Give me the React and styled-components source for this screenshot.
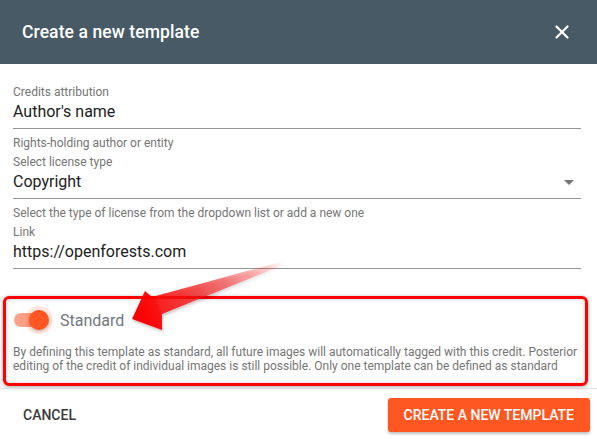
import React from "react";
import styled, { createGlobalStyle } from "styled-components";
import { X } from "lucide-react";

const GlobalStyle = createGlobalStyle`
  html, body {
    margin: 0;
    padding: 0;
    background: #ffffff;
  }
  body {
    font-family: Roboto, "Liberation Sans", Arial, sans-serif;
  }
`;

const fields = [
  {
    label: "Credits attribution",
    value: "Author's name",
    helper: "Rights-holding author or entity",
  },
  {
    label: "Select license type",
    value: "Copyright",
    helper: "Select the type of license from the dropdown list or add a new one",
    select: true,
  },
  {
    label: "Link",
    value: "https://openforests.com",
  },
];

function App() {
  return (
    <>
      <GlobalStyle />
      <Dialog>
        <Header>
          <Title>Create a new template</Title>
          <CloseButton aria-label="close">
            <X size={22} strokeWidth={2.4} />
          </CloseButton>
        </Header>

        <Form>
          {fields.map((f) => (
            <Field key={f.label}>
              <Label>{f.label}</Label>
              <InputRow>
                <Value>{f.value}</Value>
                {f.select && <Caret />}
              </InputRow>
              {f.helper && <Helper>{f.helper}</Helper>}
            </Field>
          ))}
        </Form>

        <Highlight>
          <ToggleRow>
            <Switch>
              <Track />
              <Thumb />
            </Switch>
            <SwitchLabel>Standard</SwitchLabel>
          </ToggleRow>
          <Description>
            By defining this template as standard, all future images will
            automatically tagged with this credit. Posterior editing of the
            credit of individual images is still possible. Only one template
            can be defined as standard
          </Description>
        </Highlight>

        <Footer>
          <TextButton>Cancel</TextButton>
          <PrimaryButton>Create a new template</PrimaryButton>
        </Footer>

        {/* annotation arrow drawn over the dialog */}
        <Arrow viewBox="0 0 597 439" width="597" height="439">
          <defs>
            <linearGradient id="arrowFade" x1="284" y1="262" x2="140" y2="318" gradientUnits="userSpaceOnUse">
              <stop offset="0" stopColor="#ff0000" stopOpacity="0" />
              <stop offset="0.45" stopColor="#ee1c1c" stopOpacity="0.6" />
              <stop offset="1" stopColor="#ff0000" stopOpacity="1" />
            </linearGradient>
            <filter id="arrowShadow" x="-10%" y="-10%" width="120%" height="130%">
              <feDropShadow dx="1" dy="2" stdDeviation="1.5" floodColor="#000" floodOpacity="0.25" />
            </filter>
          </defs>
          <polygon
            points="132,319 145,291 152,297 284,261 286,264 162,314 162,330"
            fill="url(#arrowFade)"
            filter="url(#arrowShadow)"
          />
        </Arrow>
      </Dialog>
    </>
  );
}

export default App;

const Dialog = styled.div`
  position: relative;
  width: 597px;
  height: 439px;
  display: flex;
  flex-direction: column;
  background: #ffffff;
  overflow: hidden;
`;

const Header = styled.div`
  height: 64px;
  flex-shrink: 0;
  background: #475a65;
  display: flex;
  align-items: center;
  justify-content: space-between;
  padding: 0 21px 0 22px;
`;

const Title = styled.div`
  color: #ffffff;
  font-size: 17.5px;
  font-weight: 500;
  letter-spacing: 0.1px;
`;

const CloseButton = styled.div`
  color: #ffffff;
  display: flex;
  align-items: center;
  justify-content: center;
  width: 28px;
  height: 28px;
`;

const Form = styled.div`
  padding: 20px 16px 0 13px;
  display: flex;
  flex-direction: column;
  gap: 4px;
`;

const Field = styled.div`
  display: flex;
  flex-direction: column;
`;

const Label = styled.div`
  font-size: 12px;
  line-height: 16px;
  color: #757575;
`;

const InputRow = styled.div`
  display: flex;
  align-items: center;
  justify-content: space-between;
  height: 24px;
  padding-bottom: 4px;
  border-bottom: 1px solid #949494;
`;

const Value = styled.div`
  font-size: 16px;
  line-height: 24px;
  color: #212121;
`;

const Caret = styled.div`
  width: 0;
  height: 0;
  margin-right: 7px;
  border-left: 5px solid transparent;
  border-right: 5px solid transparent;
  border-top: 5px solid #757575;
`;

const Helper = styled.div`
  margin-top: 7px;
  font-size: 12px;
  line-height: 14px;
  color: #757575;
`;

const Highlight = styled.div`
  margin: 27px 9px 0 3px;
  border: 3px solid #ff0000;
  border-radius: 6px;
  padding: 4px 6px 10px 7px;
  box-shadow: 0 1px 4px rgba(0, 0, 0, 0.35), inset 0 0 4px rgba(0, 0, 0, 0.2);
`;

const ToggleRow = styled.div`
  display: flex;
  align-items: center;
  gap: 9px;
  height: 34px;
`;

const Switch = styled.div`
  position: relative;
  width: 42px;
  height: 34px;
  display: flex;
  align-items: center;
  margin-left: -4px;
`;

const Track = styled.div`
  margin-left: 5px;
  width: 30px;
  height: 14px;
  border-radius: 7px;
  background: #ff8a65;
  opacity: 0.8;
`;

const Thumb = styled.div`
  position: absolute;
  left: 20px;
  top: 7px;
  width: 20px;
  height: 20px;
  border-radius: 50%;
  background: #ff5722;
  box-shadow: 0 0 0 4px rgba(255, 87, 34, 0.14), 0 1px 3px rgba(0, 0, 0, 0.3);
`;

const SwitchLabel = styled.div`
  font-size: 16px;
  color: #6f7780;
`;

const Description = styled.div`
  margin-top: 8px;
  font-size: 12px;
  line-height: 14px;
  color: #757575;
`;

const Footer = styled.div`
  margin-top: 2px;
  border-top: 1px solid #e0e0e0;
  flex: 1;
  display: flex;
  align-items: flex-start;
  justify-content: space-between;
  padding: 9px 7px 0 7px;
`;

const TextButton = styled.div`
  height: 34px;
  display: flex;
  align-items: center;
  padding: 0 16px;
  font-size: 14px;
  font-weight: 500;
  color: #3a3a3a;
  text-transform: uppercase;
`;

const PrimaryButton = styled.div`
  height: 34px;
  display: flex;
  align-items: center;
  padding: 0 16px;
  background: #ff5722;
  border-radius: 3px;
  box-shadow: 0 2px 3px rgba(0, 0, 0, 0.25);
  font-size: 14px;
  font-weight: 500;
  color: #ffffff;
  text-transform: uppercase;
`;

const Arrow = styled.svg`
  position: absolute;
  left: 0;
  top: 0;
  pointer-events: none;
`;
